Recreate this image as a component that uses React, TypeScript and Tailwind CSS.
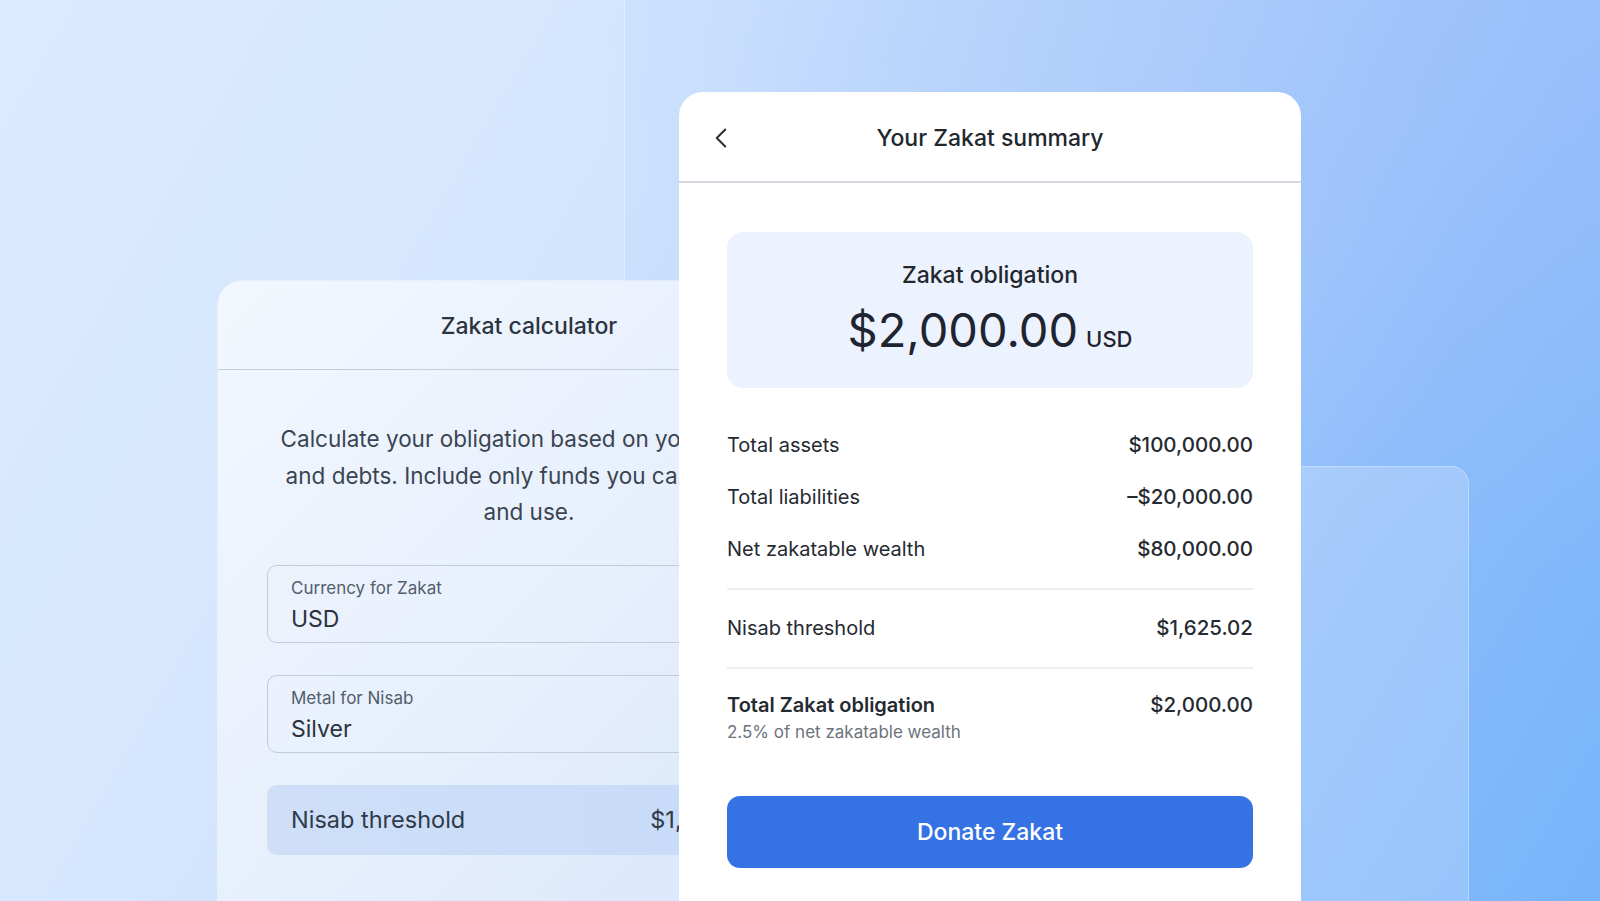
import { ChevronLeft } from "lucide-react";

const ROWS = [
  { label: "Total assets", value: "$100,000.00" },
  { label: "Total liabilities", value: "–$20,000.00" },
  { label: "Net zakatable wealth", value: "$80,000.00" },
];

function Field({ label, value }: { label: string; value: string }) {
  return (
    <div className="h-[78px] rounded-[10px] border border-[#c3cbd6] px-[23px] pt-[10px]">
      <div className="text-[17px] leading-[24px] text-[#525d6b]">{label}</div>
      <div className="mt-[4px] text-[23px] leading-[30px] text-[#2a3340]">{value}</div>
    </div>
  );
}

function CalculatorCard() {
  return (
    <div className="absolute left-[218px] top-[281px] w-[622px] h-[660px] rounded-[24px] bg-[linear-gradient(135deg,#f3f7fe_0%,#e6effc_55%,#d6e4fb_100%)] shadow-[0_0_0_1px_rgba(255,255,255,0.4)]">
      <div className="h-[89px] flex items-center justify-center pt-[3px] border-b border-[#c4ccd8]">
        <h2 className="text-[23px] font-medium text-[#2b3440]">Zakat calculator</h2>
      </div>
      <div className="px-[49px]">
        <p className="mx-auto mt-[51px] max-w-[510px] text-center text-[22.5px] leading-[36.5px] text-[#3a4452]">
          Calculate your obligation based on your assets and debts. Include only funds you can access and use.
        </p>
        <div className="mt-[34px] flex flex-col gap-[32px]">
          <Field label="Currency for Zakat" value="USD" />
          <Field label="Metal for Nisab" value="Silver" />
        </div>
        <div className="mt-[32px] h-[70px] rounded-[10px] bg-[linear-gradient(90deg,#cfdff8_0%,#c6daf8_100%)] pl-[24px] pr-[32px] flex items-center justify-between text-[23.5px] text-[#2f3a48]">
          <span>Nisab threshold</span>
          <span>$1,625.02</span>
        </div>
      </div>
    </div>
  );
}

function SummaryCard() {
  return (
    <div className="absolute left-[679px] top-[92px] w-[622px] h-[840px] rounded-[24px] bg-white">
      <div className="relative h-[91px] flex items-center justify-center pt-[4px] border-b-2 border-[#d3d7de]">
        <ChevronLeft className="absolute left-[25px] top-[29px] text-[#2a2f36]" size={34} strokeWidth={1.4} />
        <h1 className="text-[23px] font-medium text-[#22272e]">Your Zakat summary</h1>
      </div>
      <div className="px-[48px]">
        <div className="mt-[49px] h-[156px] rounded-[16px] bg-[#edf3fe] flex flex-col items-center pt-[28px]">
          <div className="text-[23px] leading-[30px] font-medium text-[#22272e]">Zakat obligation</div>
          <div className="mt-[12px] flex items-baseline gap-[8px] text-[#1f2530]">
            <span className="text-[47px] leading-[56px]">$2,000.00</span>
            <span className="text-[22px] font-medium">USD</span>
          </div>
        </div>

        <div className="mt-[31px]">
          {ROWS.map((r) => (
            <div key={r.label} className="h-[52px] flex items-center justify-between text-[20px] text-[#252a31]">
              <span>{r.label}</span>
              <span className="text-[20.5px] font-medium">{r.value}</span>
            </div>
          ))}
        </div>
        <div className="mt-[13px] h-[2px] bg-[#eceef1]" />
        <div className="mt-[12px] h-[52px] flex items-center justify-between text-[20px] text-[#252a31]">
          <span>Nisab threshold</span>
          <span className="text-[20.5px] font-medium">$1,625.02</span>
        </div>
        <div className="mt-[13px] h-[2px] bg-[#eceef1]" />
        <div className="mt-[23px] flex justify-between text-[20px] leading-[26px] text-[#252a31]">
          <div>
            <div className="font-semibold">Total Zakat obligation</div>
            <div className="mt-[3px] text-[17px] leading-[22px] text-[#6c737c]">2.5% of net zakatable wealth</div>
          </div>
          <span className="text-[20.5px] font-medium">$2,000.00</span>
        </div>
        <button className="mt-[53px] w-full h-[72px] rounded-[13px] bg-[#3573e5] text-white text-[23px] font-medium">
          Donate Zakat
        </button>
      </div>
    </div>
  );
}

export default function App() {
  return (
    <div
      className="relative w-[1600px] h-[901px] overflow-hidden bg-[linear-gradient(120deg,#d6e8ff_0%,#cce1fd_35%,#b3d1fc_58%,#8dbdfb_78%,#77b4fb_100%)]"
      style={{ fontFamily: "Inter, 'Noto Sans', sans-serif" }}
    >
      <div className="absolute inset-0 bg-[radial-gradient(ellipse_at_100%_0%,rgba(158,192,250,0.6)_0%,rgba(158,192,250,0)_45%)]" />
      <div className="absolute left-0 top-0 w-[625px] h-[901px] bg-white/15 border-r border-white/30" />
      <div className="absolute left-[1100px] top-[466px] w-[369px] h-[500px] rounded-[18px] bg-white/20 border border-white/30" />
      <CalculatorCard />
      <SummaryCard />
    </div>
  );
}
